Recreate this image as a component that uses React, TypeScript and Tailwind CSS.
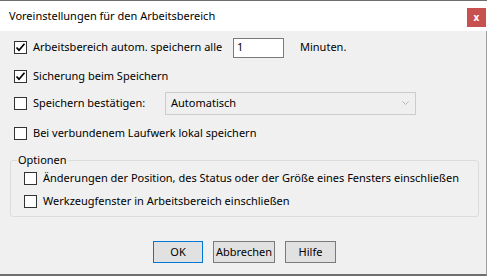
const font = { fontFamily: '"Noto Sans", "Liberation Sans", sans-serif' }

function CheckBox({ checked }: { checked?: boolean }) {
    return (
        <span className="w-[13px] h-[13px] border border-[#333333] bg-white flex items-center justify-center shrink-0">
            {checked && (
                <svg width="11" height="11" viewBox="0 0 11 11">
                    <path d="M1.5 5.5 L4 8.2 L9.5 1.8" fill="none" stroke="#000" strokeWidth="1.7" />
                </svg>
            )}
        </span>
    )
}

function Btn({ label, width, primary }: { label: string; width: string; primary?: boolean }) {
    return (
        <button
            className={`h-[22px] ${width} bg-[#e1e1e1] text-[11px] text-black border ${primary ? 'border-[#0078d7]' : 'border-[#7a7a7a]'}`}
        >
            {label}
        </button>
    )
}

export default function App() {
    return (
        <div className="w-[487px] h-[276px] flex flex-col border-t border-[#6e6e6e] text-[11px] text-black bg-[#f0f0f0] whitespace-nowrap" style={font}>
            {/* Title bar */}
            <div className="h-[30px] bg-white flex items-center justify-between pl-[9px] pr-[1px]">
                <span className="text-[11px]">Voreinstellungen für den Arbeitsbereich</span>
                <button className="w-[19px] h-[19px] bg-[#c75050] text-white text-[10px] font-bold flex items-center justify-center mt-[2px]">
                    x
                </button>
            </div>

            {/* Content */}
            <div className="flex-1 flex flex-col border-r border-[#a0a0a0] border-b-2 border-b-[#6e6e6e]">
                <div className="h-[21px] mt-[6px] flex items-center pl-[14px]">
                    <CheckBox checked />
                    <span className="ml-[6px] w-[194px]">Arbeitsbereich autom. speichern alle</span>
                    <span className="ml-[6px] w-[51px] h-[20px] border border-[#7a7a7a] bg-white pl-[3px] flex items-center">
                        1
                    </span>
                    <span className="ml-[16px]">Minuten.</span>
                </div>

                <div className="h-[21px] mt-[8px] flex items-center pl-[14px]">
                    <CheckBox checked />
                    <span className="ml-[6px]">Sicherung beim Speichern</span>
                </div>

                <div className="h-[23px] mt-[5px] flex items-center pl-[14px]">
                    <CheckBox />
                    <span className="ml-[6px] w-[132px]">Speichern bestätigen:</span>
                    <div className="w-[251px] h-[23px] border border-[#cccccc] bg-[#efefef] flex items-center justify-between pl-[5px] pr-[6px]">
                        <span>Automatisch</span>
                        <svg width="7" height="5" viewBox="0 0 7 5">
                            <path d="M0.5 0.5 L3.5 3.5 L6.5 0.5" fill="none" stroke="#b5b5b5" strokeWidth="1" />
                        </svg>
                    </div>
                </div>

                <div className="h-[21px] mt-[8px] flex items-center pl-[14px]">
                    <CheckBox />
                    <span className="ml-[6px]">Bei verbundenem Laufwerk lokal speichern</span>
                </div>

                <fieldset className="ml-[10px] w-[469px] mt-[8px] border border-[#dcdcdc] rounded-[3px] px-[13px] pb-[4px]">
                    <legend className="ml-[-7px] px-[1px] leading-[16px]">Optionen</legend>
                    <div className="h-[21px] flex items-center">
                        <CheckBox />
                        <span className="ml-[6px]">Änderungen der Position, des Status oder der Größe eines Fensters einschließen</span>
                    </div>
                    <div className="h-[21px] mt-[2px] flex items-center">
                        <CheckBox />
                        <span className="ml-[6px]">Werkzeugfenster in Arbeitsbereich einschließen</span>
                    </div>
                </fieldset>

                <div className="flex mt-[24px] ml-[153px] gap-[10px]">
                    <Btn label="OK" width="w-[50px]" primary />
                    <Btn label="Abbrechen" width="w-[62px]" />
                    <Btn label="Hilfe" width="w-[51px]" />
                </div>
            </div>
        </div>
    )
}
